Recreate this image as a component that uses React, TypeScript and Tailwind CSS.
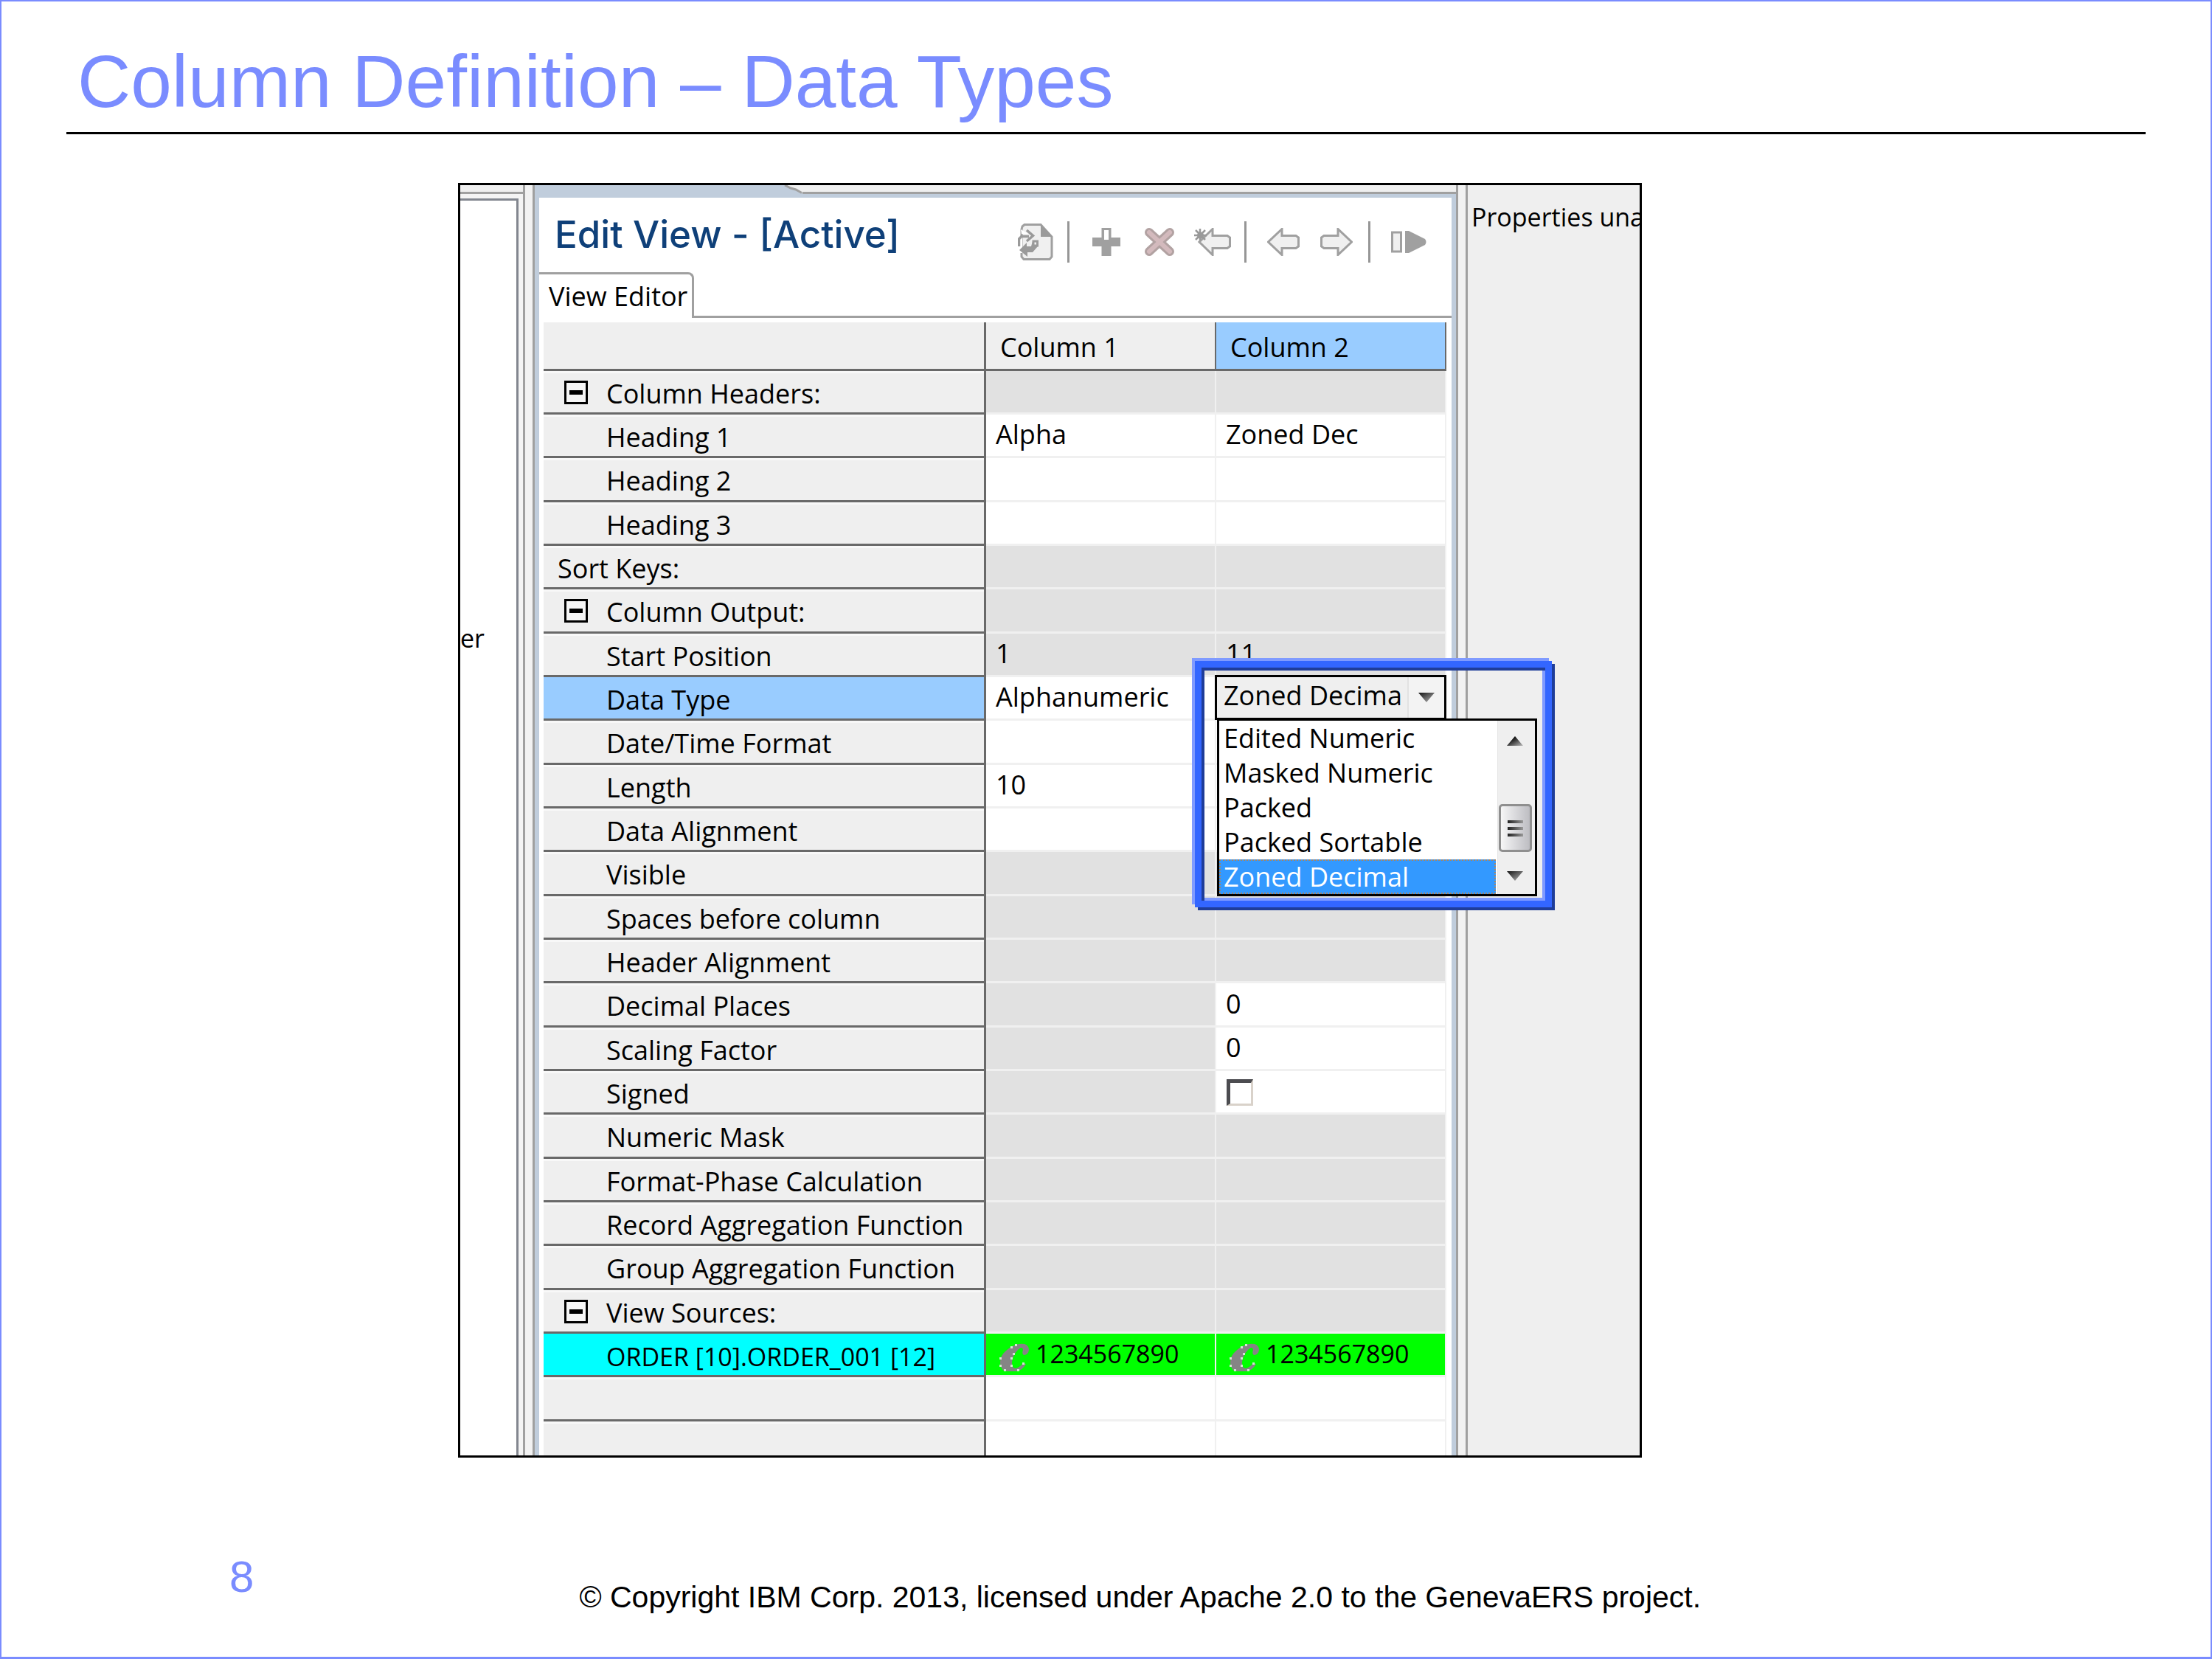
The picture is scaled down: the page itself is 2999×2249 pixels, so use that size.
import type { ReactNode } from "react";

type Tone = "gray" | "white" | "green";

interface Row {
  label: string;
  kind?: "group" | "sort" | "source" | "active" | "blank";
  tones: [Tone, Tone];
  cells?: [ReactNode, ReactNode];
}

const GG: [Tone, Tone] = ["gray", "gray"];
const WW: [Tone, Tone] = ["white", "white"];
const GW: [Tone, Tone] = ["gray", "white"];

const toneClass: Record<Tone, string> = {
  gray: "bg-[#e1e1e1]",
  white: "bg-white",
  green: "bg-[#00ff00]",
};

const OPTIONS = ["Edited Numeric", "Masked Numeric", "Packed", "Packed Sortable", "Zoned Decimal"];

function ScriptC() {
  return (
    <svg viewBox="0 0 42 40" className="mt-3 h-[40px] w-[42px] shrink-0" aria-hidden="true">
      <path
        d="M23 2 Q30 0 35 1 Q41 3 41 9 Q40 16 34 16 Q31 14 33 9 Q33 6 30 6 Q26 8 22 14 Q18 21 18 27 Q18 34 23 34 Q28 33 33 27 L37 28 Q32 37 24 38 L8 38 Q2 34 2 26 Q2 17 9 11 Q15 5 23 2 Z"
        fill="#858585"
      />
      <g fill="#d5e5d5">
        {[[24, 3], [18, 6], [3, 21], [3, 31], [9, 37], [27, 37], [34, 28], [21, 15], [18, 21], [18, 31]].map(([x, y]) => (
          <rect key={`${x}-${y}`} x={x - 2} y={y - 2} width="3" height="3" />
        ))}
      </g>
    </svg>
  );
}

function SourceValue() {
  return (
    <span className="flex items-center gap-[8px] pl-1 text-[34px]">
      <ScriptC />
      1234567890
    </span>
  );
}

function TriangleDown() {
  return (
    <svg viewBox="0 0 22 13" className="h-[13px] w-[22px]" aria-hidden="true">
      <defs>
        <linearGradient id="tri-down" x1="0" y1="0" x2="1" y2="1">
          <stop offset="0" stopColor="#111" />
          <stop offset="1" stopColor="#bbb" />
        </linearGradient>
      </defs>
      <path d="M0 0 H22 L11 13 Z" fill="url(#tri-down)" />
    </svg>
  );
}

function TriangleUp() {
  return (
    <svg viewBox="0 0 22 13" className="h-[13px] w-[22px]" aria-hidden="true">
      <defs>
        <linearGradient id="tri-up" x1="0" y1="0" x2="1" y2="1">
          <stop offset="0.3" stopColor="#111" />
          <stop offset="1" stopColor="#bbb" />
        </linearGradient>
      </defs>
      <path d="M11 0 L22 13 H0 Z" fill="url(#tri-up)" />
    </svg>
  );
}

function DataTypePopup() {
  return (
    <div className="absolute -top-[22px] -left-[29px] z-10 border-[9px] border-[#3366ff] pt-[10px] pr-[11px] pb-[6px] pl-[18px] shadow-[-4px_-4px_0_#809bff,4px_4px_0_#1f3d99,inset_4px_4px_0_#1f3d99,inset_-4px_-4px_0_#809bff]">
      <div className="relative h-[61px] w-[314px]">
        <select
          aria-label="Data Type, Column 2"
          defaultValue="Zoned Decimal"
          className="h-full w-full appearance-none overflow-hidden border-[3px] border-black bg-[#efefef] pr-[57px] pb-[6px] pl-[9px] text-[36px] leading-[49px] text-black"
        >
          {OPTIONS.map((o) => (
            <option key={o}>{o}</option>
          ))}
        </select>
        <span className="pointer-events-none absolute top-[3px] right-[3px] flex h-[55px] w-[50px] items-center justify-center border-l-2 border-[#e2e2e2] bg-[#f3f3f3]">
          <TriangleDown />
        </span>
      </div>
      <div className="-mt-[2px] ml-[3px] flex w-[434px] border-[3px] border-black bg-white">
        <ul role="listbox" aria-label="Data types" className="flex-1 leading-[47px]">
          {OPTIONS.map((o) =>
            o === "Zoned Decimal" ? (
              <li
                key={o}
                role="option"
                aria-selected="true"
                className="bg-[#3399ff] pl-[6px] text-white outline-2 -outline-offset-2 outline-dotted outline-[#a88460]"
              >
                {o}
              </li>
            ) : (
              <li key={o} role="option" aria-selected="false" className="pl-[6px]">
                {o}
              </li>
            ),
          )}
        </ul>
        <div className="ml-[2px] flex w-[51px] flex-col items-center border-l border-[#e6e6e6] bg-[#efefef] pt-[21px] pr-1 pb-[18px]">
          <TriangleUp />
          <div className="mt-[79px] flex h-[65px] w-[45px] flex-col items-center justify-center gap-[5px] rounded-[5px] border-[3px] border-[#8f8f8f] bg-linear-to-r from-[#f7f7f7] via-[#d9d9dc] to-[#bdbdc2]">
            <span className="h-[4px] w-[21px] bg-linear-to-r from-[#222] to-[#999]" />
            <span className="h-[4px] w-[21px] bg-linear-to-r from-[#222] to-[#999]" />
            <span className="h-[4px] w-[21px] bg-linear-to-r from-[#222] to-[#999]" />
          </div>
          <div className="mt-auto">
            <TriangleDown />
          </div>
        </div>
      </div>
    </div>
  );
}

const ROWS: Row[] = [
  { label: "Column Headers:", kind: "group", tones: GG },
  { label: "Heading 1", tones: WW, cells: ["Alpha", "Zoned Dec"] },
  { label: "Heading 2", tones: WW },
  { label: "Heading 3", tones: WW },
  { label: "Sort Keys:", kind: "sort", tones: GG },
  { label: "Column Output:", kind: "group", tones: GG },
  { label: "Start Position", tones: GG, cells: ["1", "11"] },
  { label: "Data Type", kind: "active", tones: WW, cells: ["Alphanumeric", <DataTypePopup key="popup" />] },
  { label: "Date/Time Format", tones: WW },
  { label: "Length", tones: WW, cells: ["10", null] },
  { label: "Data Alignment", tones: WW },
  { label: "Visible", tones: GG },
  { label: "Spaces before column", tones: GG },
  { label: "Header Alignment", tones: GG },
  { label: "Decimal Places", tones: GW, cells: [null, "0"] },
  { label: "Scaling Factor", tones: GW, cells: [null, "0"] },
  {
    label: "Signed",
    tones: GW,
    cells: [
      null,
      <input
        key="signed"
        type="checkbox"
        aria-label="Signed, Column 2"
        className="mt-1 ml-[1px] block size-[36px] appearance-none border-t-[5px] border-r-[3px] border-b-[3px] border-l-[5px] border-t-[#4c4c50] border-r-[#d9d2ca] border-b-[#d9d2ca] border-l-[#4c4c50] bg-white"
      />,
    ],
  },
  { label: "Numeric Mask", tones: GG },
  { label: "Format-Phase Calculation", tones: GG },
  { label: "Record Aggregation Function", tones: GG },
  { label: "Group Aggregation Function", tones: GG },
  { label: "View Sources:", kind: "group", tones: GG },
  {
    label: "ORDER [10].ORDER_001 [12]",
    kind: "source",
    tones: ["green", "green"],
    cells: [<SourceValue key="a" />, <SourceValue key="b" />],
  },
  { label: "", kind: "blank", tones: WW },
];

function RowLabel({ row }: { row: Row }) {
  const base = "border-r-[3px] border-b-[3px] border-[#696969] p-0 pt-[5px] text-left font-normal whitespace-nowrap";
  if (row.kind === "group")
    return (
      <th scope="row" className={`${base} bg-[#efefef] shadow-[inset_0_3px_0_#f8f8f8]`}>
        <span className="flex items-center gap-[25px] pl-[28px]">
          <button
            type="button"
            aria-label={`Collapse ${row.label}`}
            className="mb-1 flex size-[32px] items-center justify-center border-[3px] border-black bg-[#f6f6f6]"
          >
            <span className="h-[6px] w-[18px] bg-black" />
          </button>
          {row.label}
        </span>
      </th>
    );
  if (row.kind === "sort")
    return (
      <th scope="row" className={`${base} bg-[#efefef] shadow-[inset_0_3px_0_#f8f8f8]`}>
        <span className="pl-[19px]">{row.label}</span>
      </th>
    );
  if (row.kind === "active")
    return (
      <th scope="row" className={`${base} bg-[#99ccff]`}>
        <span className="pl-[85px]">{row.label}</span>
      </th>
    );
  if (row.kind === "source")
    return (
      <th scope="row" className={`${base} bg-[#00ffff]`}>
        <span className="pl-[85px] text-[34px]">{row.label}</span>
      </th>
    );
  return (
    <th scope="row" className={`${base} bg-[#efefef] shadow-[inset_0_3px_0_#f8f8f8]`}>
      <span className="pl-[85px]">{row.label}</span>
    </th>
  );
}

function ViewTable() {
  return (
    <table className="w-full table-fixed border-separate border-spacing-0 text-[36px] leading-[48px] text-black">
      <colgroup>
        <col />
        <col className="w-[312px]" />
        <col className="w-[312px]" />
      </colgroup>
      <thead>
        <tr className="h-[66px]">
          <td className="border-r-[3px] border-b-[3px] border-[#696969] bg-[#efefef] p-0" />
          <th scope="col" className="border-r-2 border-b-[3px] border-[#696969] bg-[#efefef] p-0 pt-[5px] pl-[19px] text-left font-normal">
            Column 1
          </th>
          <th scope="col" className="border-r-2 border-b-[3px] border-[#696969] bg-[#99ccff] p-0 pt-[5px] pl-[19px] text-left font-normal">
            Column 2
          </th>
        </tr>
      </thead>
      <tbody>
        {ROWS.map((row, i) => (
          <tr key={i} className="h-[59px] nth-[3n]:h-[60px]">
            <RowLabel row={row} />
            {row.tones.map((tone, c) => (
              <td
                key={c}
                className={`relative border-r-2 border-b-[3px] border-[#f0f0f0] p-0 pb-[2px] pl-[13px] whitespace-nowrap ${toneClass[tone]}`}
              >
                {row.cells?.[c]}
              </td>
            ))}
          </tr>
        ))}
        <tr className="h-[46px]">
          <td className="border-r-[3px] border-[#696969] bg-[#efefef] p-0 shadow-[inset_0_3px_0_#f8f8f8]" />
          <td className="border-r-2 border-[#f0f0f0] bg-white p-0" />
          <td className="border-r-2 border-[#f0f0f0] bg-white p-0" />
        </tr>
      </tbody>
    </table>
  );
}

function ToolButton({ label, children }: { label: string; children: ReactNode }) {
  return (
    <button type="button" aria-label={label} className="flex h-14 w-[72px] items-center justify-center">
      {children}
    </button>
  );
}

function Separator() {
  return (
    <span className="flex h-14 w-6 pl-[7px]">
      <span className="w-[3px] bg-[#969696]" />
    </span>
  );
}

function Toolbar() {
  return (
    <div role="toolbar" aria-label="View actions" className="flex">
      <ToolButton label="Refresh view">
        <svg viewBox="0 0 48 50" className="h-[50px] w-[48px]">
          <path d="M6 4 L9 1.500 H31 L46 18 V45 L43 48.500 H8 L5 45 V8 Z" fill="#f0f0f0" stroke="#a0a0a0" strokeWidth="3" />
          <path d="M31 1 L47 18 H31 Z" fill="#9a9a9a" />
          <path d="M0 18 H6 V40 H0 Z" fill="#ffffff" />
          <path d="M1.500 31 V21 L5 17.500 H15 M12 9 L20.500 16.500 L12 24" fill="none" stroke="#9a9a9a" strokeWidth="3.500" />
          <path d="M4 8 L14 14 H5 Z" fill="#ffffff" />
          <path d="M2 36 L12 26 V31 H18 L20 24 H27 V31 L20 39 H13 V45 Z" fill="#9a9a9a" />
          <rect x="21" y="24" width="5.500" height="6" fill="#f0f0f0" stroke="#9a9a9a" strokeWidth="3" />
        </svg>
      </ToolButton>
      <Separator />
      <ToolButton label="Add">
        <svg viewBox="0 0 38 38" className="h-[38px] w-[38px]">
          <path d="M12.500 0 H25.500 V13 H38 V25 H25.500 V38 H12.500 V25 H0 V13 H12.500 Z" fill="#a0a0a0" />
          <path d="M16 3 H22 V16 H16 Z" fill="#ffffff" />
        </svg>
      </ToolButton>
      <ToolButton label="Delete">
        <svg viewBox="0 0 42 38" className="h-[38px] w-[42px]">
          <path d="M7 6 L35 32 M35 6 L7 32" stroke="#b2a2a2" strokeWidth="12" strokeLinecap="round" />
          <path d="M7 6 L35 32 M35 6 L7 32" stroke="#d3babd" strokeWidth="6" strokeLinecap="round" />
        </svg>
      </ToolButton>
      <ToolButton label="Insert before">
        <svg viewBox="0 0 50 38" className="h-[38px] w-[50px]">
          <path d="M25 1.500 V10.500 H45 L48.500 13 V25 L45 27.500 H25 V36.500 L7 19 Z" fill="#f0f0f0" stroke="#a0a0a0" strokeWidth="3" />
          <path d="M8 1 V17 M0 10 H17 M2 3 L15 16 M15 3 L2 16" stroke="#999999" strokeWidth="2.500" />
          <circle cx="8.500" cy="10" r="4.500" fill="#999999" />
        </svg>
      </ToolButton>
      <Separator />
      <ToolButton label="Move left">
        <svg viewBox="0 0 44 38" className="h-[38px] w-[44px]">
          <path d="M20 1.500 V10.500 H39 L42.500 13 V25 L39 27.500 H20 V36.500 L1.500 19 Z" fill="#f0f0f0" stroke="#a0a0a0" strokeWidth="3" />
        </svg>
      </ToolButton>
      <ToolButton label="Move right">
        <svg viewBox="0 0 44 38" className="h-[38px] w-[44px]">
          <path d="M24 1.500 V10.500 H5 L1.500 13 V25 L5 27.500 H24 V36.500 L42.500 19 Z" fill="#f0f0f0" stroke="#a0a0a0" strokeWidth="3" />
        </svg>
      </ToolButton>
      <Separator />
      <ToolButton label="Run">
        <svg viewBox="-4 0 52 32" className="h-[32px] w-[52px]">
          <rect x="1.500" y="3" width="12" height="26" fill="#f0f0f0" stroke="#a0a0a0" strokeWidth="3" />
          <path d="M19 1 H24 L46 12 Q49 16 46 20 L24 31 H19 Z" fill="#a0a0a0" />
        </svg>
      </ToolButton>
    </div>
  );
}

function EditorPane() {
  return (
    <section className="flex min-w-0 flex-1 flex-col border-x-[3px] border-[#a0a0a0] bg-[#c0cddc]">
      <div className="flex h-[17px]">
        <div className="w-[338px]" />
        <svg viewBox="0 0 25 12" className="h-[12px] w-[25px]" aria-hidden="true">
          <path d="M3 0 L25 11 V0 Z" fill="#efefef" />
          <path d="M1 0 L9 4 L16 6 L24 10.500" fill="none" stroke="#a0a0a0" strokeWidth="3" />
        </svg>
        <div className="h-[12px] flex-1 border-b-[3px] border-[#a0a0a0] bg-[#efefef]" />
      </div>
      <div className="mx-[6px] flex-1 bg-white">
        <header className="flex h-[101px] items-start justify-between pr-6 pl-[21px]">
          <h2 className="pt-[22px] font-['Inter',sans-serif] text-[51px] leading-[56px] font-medium whitespace-nowrap text-[#0f4079]">
            Edit View - [Active]
          </h2>
          <div className="pt-8">
            <Toolbar />
          </div>
        </header>
        <div role="tablist" className="flex h-[62px]">
          <button
            type="button"
            role="tab"
            aria-selected="true"
            className="w-[210px] rounded-tr-[8px] border-t-[3px] border-r-[3px] border-[#a0a0a0] bg-white pl-[13px] text-left text-[36px] leading-[48px] whitespace-nowrap text-black"
          >
            View Editor
          </button>
          <div className="flex-1 border-b-[3px] border-[#a0a0a0]" />
        </div>
        <div className="pt-[6px] pr-[7px] pl-[6px]">
          <ViewTable />
        </div>
      </div>
    </section>
  );
}

export default function App() {
  return (
    <main className="flex min-h-screen flex-col border-2 border-b-[3px] border-[#7a8cff] bg-white font-['Liberation_Sans',Arial,sans-serif]">
      <header className="mx-[88px] border-b-[3px] border-black pt-12 pb-[9px] pl-[15px]">
        <h1 className="text-[100px] leading-[120px] text-[#7a8cff]">Column Definition – Data Types</h1>
      </header>

      <div className="mt-[66px] grid grid-cols-[619fr_1605fr_771fr]">
        <div className="col-start-2 flex overflow-hidden border-[3px] border-black bg-[#f2f2f2] font-['Open_Sans',sans-serif] text-[36px] text-black">
          <aside className="flex w-[88px] shrink-0 flex-col border-r-[3px] border-[#a0a0a0] bg-[#f4f4f4]">
            <div className="h-[12px] border-b-[3px] border-[#a0a0a0] bg-[#efefef]" />
            <div className="mt-[6px] mr-[6px] flex-1 border-t-[3px] border-r-[3px] border-[#82868f] bg-white pt-[568px] text-[34px] leading-[50px]">
              er
            </div>
          </aside>
          <div className="w-[10px] shrink-0" />
          <EditorPane />
          <div className="w-[10px] shrink-0" />
          <aside className="w-[236px] shrink-0 overflow-hidden border-l-[3px] border-[#a0a0a0] bg-[#efefef] pt-[18px] pl-[5px] text-[34px] leading-[50px] whitespace-nowrap">
            Properties una
          </aside>
        </div>
      </div>

      <footer className="mt-[132px] flex items-start pl-[309px]">
        <span className="text-[60px] leading-[60px] text-[#7a8cff]">8</span>
        <p className="mt-[33px] ml-[441px] text-[41px] leading-[48px] text-black">
          © Copyright IBM Corp. 2013, licensed under Apache 2.0 to the GenevaERS project.
        </p>
      </footer>
    </main>
  );
}
